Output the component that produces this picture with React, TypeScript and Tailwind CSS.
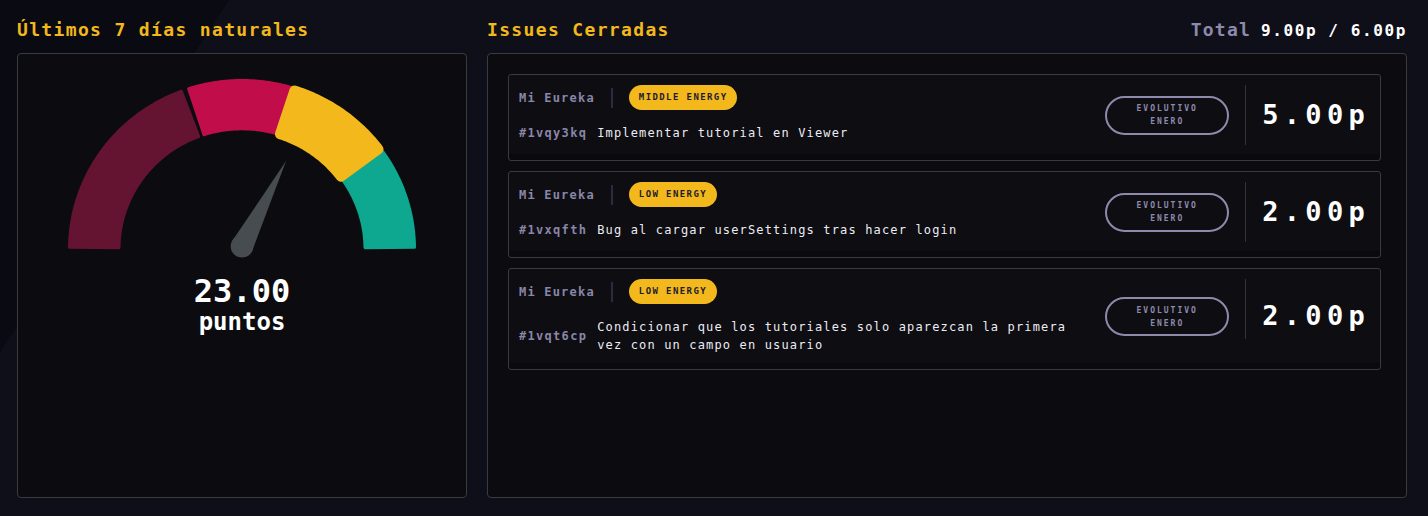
import React from "react";

type Issue = {
  project: string;
  energy: string;
  id: string;
  title: string;
  kind: string;
  month: string;
  points: string;
};

const ISSUES: Issue[] = [
  {
    project: "Mi Eureka",
    energy: "MIDDLE ENERGY",
    id: "#1vqy3kq",
    title: "Implementar tutorial en Viewer",
    kind: "EVOLUTIVO",
    month: "ENERO",
    points: "5.00p",
  },
  {
    project: "Mi Eureka",
    energy: "LOW ENERGY",
    id: "#1vxqfth",
    title: "Bug al cargar userSettings tras hacer login",
    kind: "EVOLUTIVO",
    month: "ENERO",
    points: "2.00p",
  },
  {
    project: "Mi Eureka",
    energy: "LOW ENERGY",
    id: "#1vqt6cp",
    title: "Condicionar que los tutoriales solo aparezcan la primera vez con un campo en usuario",
    kind: "EVOLUTIVO",
    month: "ENERO",
    points: "2.00p",
  },
];

// gauge geometry (svg units), angles measured from the left end of the arc
const CX = 180;
const CY = 176;
const SQUASH = 0.977;

function pt(deg: number, r: number) {
  const a = (deg * Math.PI) / 180;
  return `${(CX - r * Math.cos(a)).toFixed(2)},${(CY - SQUASH * r * Math.sin(a)).toFixed(2)}`;
}

function sector(a0: number, a1: number, r0: number, r1: number) {
  const steps = 40;
  const outer: string[] = [];
  const inner: string[] = [];
  for (let i = 0; i <= steps; i++) {
    const a = a0 + ((a1 - a0) * i) / steps;
    outer.push(pt(a, r1));
    inner.unshift(pt(a, r0));
  }
  return `M${outer.join(" L")} L${inner.join(" L")} Z`;
}

function Gauge() {
  return (
    <svg width="360" height="192" viewBox="0 0 360 192">
      <path d={sector(0.6, 69.4, 123, 172.5)} fill="#641331" stroke="#641331" strokeWidth="3" strokeLinejoin="round" />
      <path d={sector(72, 108, 123, 172.5)} fill="#c20d4b" stroke="#c20d4b" strokeWidth="3" strokeLinejoin="round" />
      <path d={sector(143, 179.4, 123, 172.5)} fill="#0da88f" stroke="#0da88f" strokeWidth="3" strokeLinejoin="round" />
      <path d={sector(107.9, 143.2, 123.5, 170.5)} fill="#f2b81c" stroke="#f2b81c" strokeWidth="10" strokeLinejoin="round" />
      {/* needle */}
      <polygon points="224,88 190,178.3 170.2,168.1" fill="#474c51" />
      <circle cx="180" cy="173.2" r="11.3" fill="#474c51" />
    </svg>
  );
}

function IssueRow({ issue }: { issue: Issue }) {
  return (
    <div className="flex items-center gap-4 rounded-[3px] border border-[#3a3a44] bg-[#0d0d12] px-[10px] pt-[10px] pb-[15px] shadow-[inset_0_-6px_0_rgba(0,0,0,0.18)]">
      <div className="flex min-w-0 flex-1 flex-col self-start">
        <div className="flex h-[25px] items-center gap-4">
          <span className="text-[12px] font-bold tracking-[1.2px] text-[#8986a8]">{issue.project}</span>
          <span className="h-[20px] w-[2px] bg-[#2c2b44]" />
          <span className="flex h-[25px] items-center rounded-full bg-[#f2b81c] px-[10px] text-[9px] font-bold tracking-[1.4px] text-[#1e1b2e]">
            {issue.energy}
          </span>
        </div>
        <div className="mt-[14px] flex items-center gap-[10px]">
          <span className="shrink-0 text-[12px] font-bold tracking-[1.3px] text-[#8986a8]">{issue.id}</span>
          <span className="text-[12px] leading-[18px] tracking-[1.15px] text-[#ececf2]">{issue.title}</span>
        </div>
      </div>
      <div className="flex h-[39px] w-[124px] shrink-0 flex-col items-center justify-center rounded-full border-2 border-[#8e8aac] text-[8px] leading-[13px] font-bold tracking-[2px] text-[#8e8aac]">
        <span>{issue.kind}</span>
        <span>{issue.month}</span>
      </div>
      <div className="h-[60px] w-px shrink-0 self-start bg-[#34343c]" />
      <span className="shrink-0 text-[27px] font-bold tracking-[5.3px] text-white">{issue.points}</span>
    </div>
  );
}

export default function App() {
  return (
    <div className="flex h-[516px] w-[1428px] gap-5 bg-[linear-gradient(123deg,#0a0b12_13%,#0e0f19_13%)] pt-[18px] pr-[21px] pb-[18px] pl-[17px] font-['DejaVu_Sans_Mono',monospace]">
      <section className="flex w-[450px] shrink-0 flex-col">
        <h2 className="h-[24px] text-[18px] leading-[24px] font-bold tracking-[1.35px] text-[#f2b81c]">
          Últimos 7 días naturales
        </h2>
        <div className="mt-[11px] flex flex-1 flex-col items-center rounded-[4px] border border-[#3a3a40] bg-[#0c0c10] pt-[19px]">
          <Gauge />
          <p className="mt-[10px] text-[32px] leading-[32px] font-bold text-white">23.00</p>
          <p className="mt-[3px] text-[24px] leading-[24px] font-bold text-white">puntos</p>
        </div>
      </section>

      <section className="flex min-w-0 flex-1 flex-col">
        <div className="flex h-[24px] items-baseline justify-between">
          <h2 className="text-[18px] leading-[24px] font-bold tracking-[1.35px] text-[#f2b81c]">Issues Cerradas</h2>
          <div className="flex items-baseline">
            <span className="text-[18px] leading-[24px] font-bold tracking-[1.2px] text-[#8e8aab]">Total</span>
            <span className="ml-[10px] text-[16px] leading-[24px] font-bold tracking-[1.6px] text-white">
              9.00p / 6.00p
            </span>
          </div>
        </div>
        <div className="mt-[11px] flex flex-1 flex-col gap-[10px] rounded-[4px] border border-[#3a3a40] bg-[#0c0c10] py-5 pr-[25px] pl-5">
          {ISSUES.map((issue) => (
            <IssueRow key={issue.id} issue={issue} />
          ))}
        </div>
      </section>
    </div>
  );
}
